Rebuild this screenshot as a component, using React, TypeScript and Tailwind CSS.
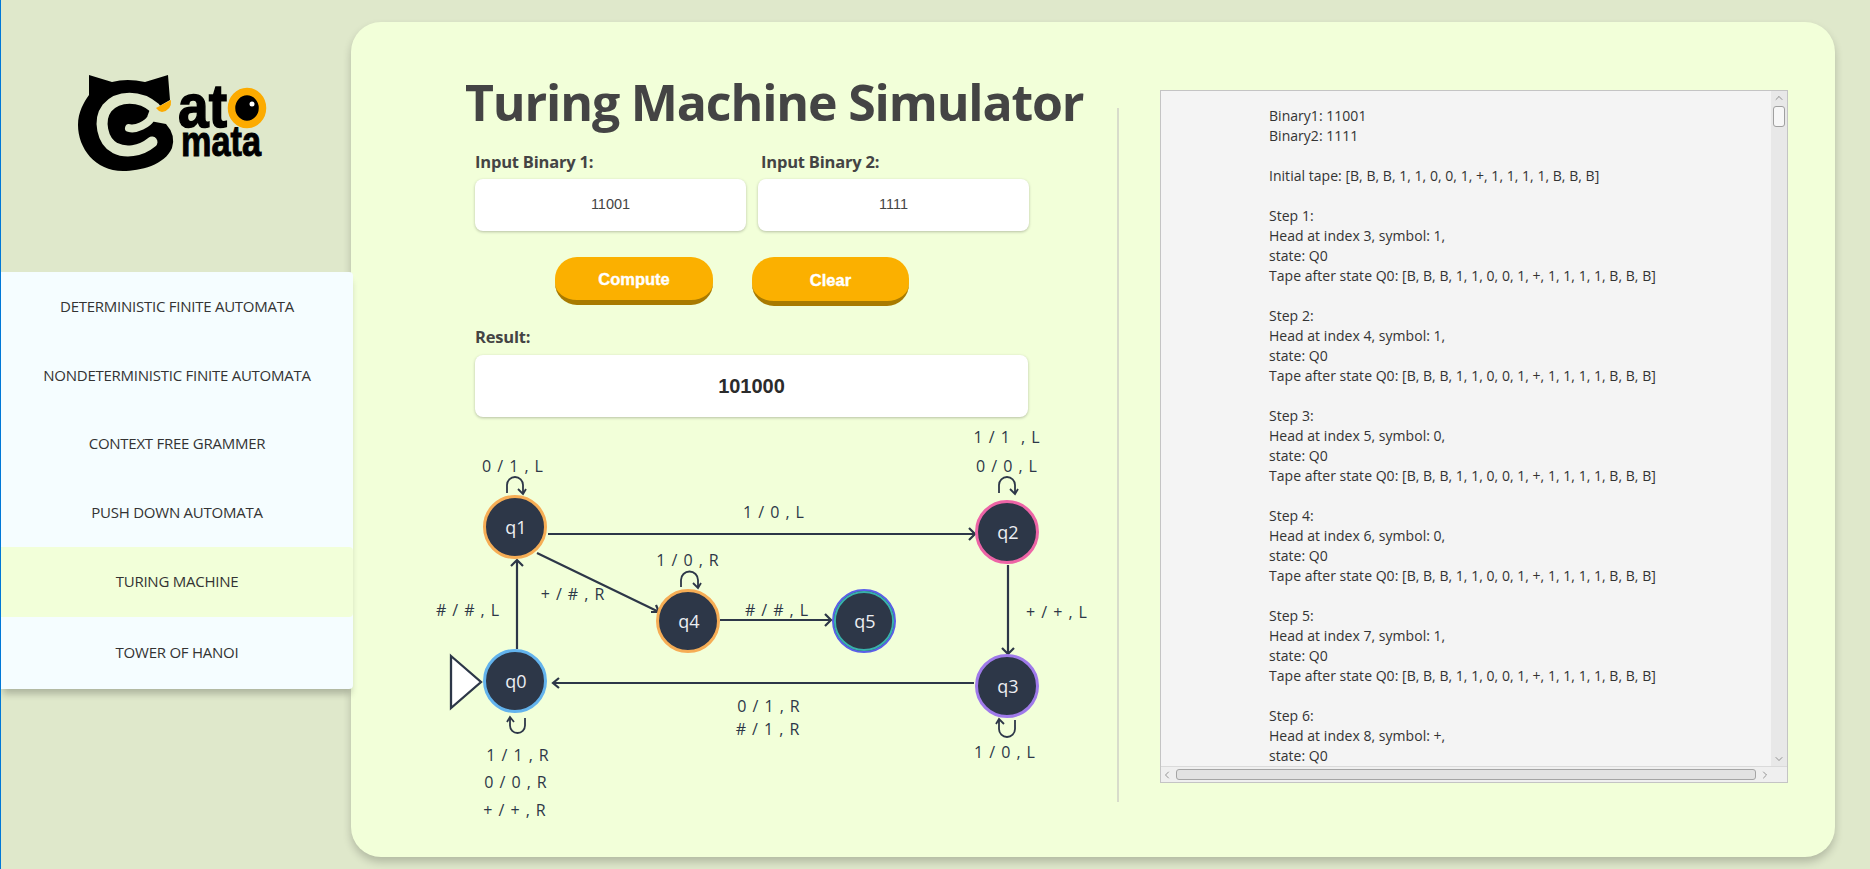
import { ChevronUp, ChevronDown, ChevronLeft, ChevronRight } from "lucide-react";

const SEGOE = "font-['Open_Sans','Noto_Sans',sans-serif]";
const NAV = [
  { label: "DETERMINISTIC FINITE AUTOMATA", h: "h-[69px]", active: false, pad: "" },
  { label: "NONDETERMINISTIC FINITE AUTOMATA", h: "h-[69px]", active: false, pad: "" },
  { label: "CONTEXT FREE GRAMMER", h: "h-[68px]", active: false, pad: "pb-[2px]" },
  { label: "PUSH DOWN AUTOMATA", h: "h-[69px]", active: false, pad: "" },
  { label: "TURING MACHINE", h: "h-[70px]", active: true, pad: "pb-[2px]" },
  { label: "TOWER OF HANOI", h: "h-[72px]", active: false, pad: "pb-[2px]" },
];

const TAPE = "[B, B, B, 1, 1, 0, 0, 1, +, 1, 1, 1, 1, B, B, B]";
const STEPS: [number, string][] = [[3, "1"], [4, "1"], [5, "0"], [6, "0"], [7, "1"], [8, "+"]];
const LINES: string[] = ["Binary1: 11001", "Binary2: 1111", "", `Initial tape: ${TAPE}`, ""];
STEPS.forEach(([i, s], n) => {
  LINES.push(`Step ${n + 1}:`, `Head at index ${i}, symbol: ${s},`, "state: Q0");
  if (n < 5) LINES.push(`Tape after state Q0: ${TAPE}`, "");
});

function Logo() {
  return (
    <svg viewBox="75 60 200 113" className="block w-[200px] h-[113px]">
      <path d="M89 75 L112 82 Q127 78 145 82 L168 75 L170 100 L156 108 L150 121 L166 124 Q176 135 172 148 C165 165 140 171 123 171 C95 171 78 148 78 125 C78 112 84 102 89 95 Z" fill="#000" />
      <path d="M152 142 C140 152 125 153 115 148 C102 141 98 120 107 108 C118 95 140 95 155 108" fill="none" stroke="#dfe8cb" strokeWidth="11" strokeLinecap="round" />
      <path d="M129 128 C136 130 148 124 151 118 L154 110" fill="none" stroke="#dfe8cb" strokeWidth="8" strokeLinecap="round" />
      <path d="M156 108 L171 100 Q172 110 162 112 Q158 111 156 108 Z" fill="#fcab00" />
      <text x="178" y="127" fontFamily="Liberation Sans" fontWeight="700" fontSize="62" textLength="49" lengthAdjust="spacingAndGlyphs" fill="#000" stroke="#000" strokeWidth="1.5">at</text>
      <ellipse cx="247" cy="108" rx="15.5" ry="16.5" fill="#000" stroke="#fcab00" strokeWidth="7.5" />
      <circle cx="252" cy="104" r="2.5" fill="#fff" />
      <text x="181" y="156" fontFamily="Liberation Sans" fontWeight="700" fontSize="42" textLength="80" lengthAdjust="spacingAndGlyphs" fill="#000" stroke="#000" strokeWidth="1">mata</text>
    </svg>
  );
}

function State({ x, y, label, border, inner }: { x: number; y: number; label: string; border: string; inner?: string }) {
  return (
    <g>
      <circle cx={x} cy={y} r={inner ? 31 : 30.5} fill="#2d3748" stroke={border} strokeWidth={inner ? 2 : 3} />
      {inner && <circle cx={x} cy={y} r={29.1} fill="#2d3748" stroke={inner} strokeWidth={2} />}
      <text x={x + 1} y={y + 6.5} textAnchor="middle" fontSize="18" fontWeight="400" fontFamily="Open Sans" fill="#eceef2">{label}</text>
    </g>
  );
}

function Diagram() {
  const labels: [number, number, string][] = [
    [513, 466, "0 / 1 , L"], [1007, 437, "1 / 1  , L"], [1007, 466, "0 / 0 , L"], [774, 512, "1 / 0 , L"],
    [688, 560, "1 / 0 , R"], [573, 594, "+ / # , R"], [468, 610, "# / # , L"], [777, 610, "# / # , L"],
    [1057, 612, "+ / + , L"], [769, 706, "0 / 1 , R"], [768, 729, "# / 1 , R"], [1005, 752, "1 / 0 , L"],
    [518, 755, "1 / 1 , R"], [516, 782, "0 / 0 , R"], [515, 810, "+ / + , R"],
  ];
  const stroke = { fill: "none", stroke: "#2d3748", strokeWidth: 2.2 };
  const thin = { fill: "none", stroke: "#2d3748", strokeWidth: 1.8 };
  return (
    <svg viewBox="430 424 680 406" className="block w-[680px] h-[406px] mt-[7px]">
      <path d="M548 534 H974 M969 528 L975 534 L969 540" {...stroke} />
      <path d="M537 553 L659 612 M651 612 L659 612 L656 605" {...stroke} />
      <path d="M720 620 H831 M825 614 L831 620 L825 626" {...stroke} />
      <path d="M1008 565 V654 M1002 648 L1008 654 L1014 648" {...stroke} />
      <path d="M974 683 H553 M559 678 L553 683 L559 688" {...stroke} />
      <path d="M517 649 V560 M511 566 L517 560 L523 566" {...stroke} />
      <path d="M507 493 V485 A8 8 0 0 1 523 485 V494 M518 489 L523 494 L526 489" {...thin} />
      <path d="M999 493 V485 A8 8 0 0 1 1015 485 V494 M1010 489 L1015 494 L1018 489" {...thin} />
      <path d="M681 587 V580 A8.5 8.5 0 0 1 698 580 V588 M693 583 L698 588 L701 583" {...thin} />
      <path d="M525 718 V725.5 A7.5 7.5 0 0 1 510 725.5 V717 M507 722 L510 717 L514 722" {...thin} />
      <path d="M1015 720 V729 A8 8 0 0 1 999 729 V719 M996 724 L999 719 L1004 724" {...thin} />
      <path d="M451 656 L481 682 L451 708 Z" fill="#fff" stroke="#2d3748" strokeWidth={2.3} />
      <State x={515} y={527} label="q1" border="#f6ad55" />
      <State x={1007} y={532} label="q2" border="#ed64a6" />
      <State x={1007} y={686} label="q3" border="#9f7aea" />
      <State x={515} y={681} label="q0" border="#63b3ed" />
      <State x={688} y={621} label="q4" border="#f6ad55" />
      <State x={864} y={621} label="q5" border="#5a5fe8" inner="#38b2ac" />
      {labels.map(([x, y, t]) => (
        <text key={`${x}-${y}`} x={x} y={y + 6} textAnchor="middle" fontSize="16" fontFamily="Open Sans" fontWeight="500" letterSpacing="0.95" fill="#2d3748" xmlSpace="preserve">{t}</text>
      ))}
    </svg>
  );
}

function TraceBox() {
  return (
    <div className={`mt-[68px] ml-[41px] w-[628px] h-[693px] border border-[#c4c4c4] bg-[#f4f4f4] flex flex-col text-[#333] ${SEGOE}`}>
      <div className="flex flex-1 min-h-0">
        <div className="flex-1 overflow-hidden pl-[108px] pt-[15px] text-[14px] leading-[20px] tracking-[0.03px] whitespace-nowrap">
          {LINES.map((l, i) => (
            <div key={i} className="h-[20px]">{l}</div>
          ))}
        </div>
        <div className="w-[16px] bg-[#e8e8e8] flex flex-col items-center justify-between pt-[1px] pb-[1px]">
          <div className="flex flex-col items-center">
            <ChevronUp size={12} strokeWidth={1.2} className="text-[#555]" />
            <div className="mt-[2px] w-[12px] h-[21px] rounded-[3px] bg-[#f7f7f7] border border-[#a0a0a0]" />
          </div>
          <ChevronDown size={12} strokeWidth={1.2} className="text-[#555]" />
        </div>
      </div>
      <div className="h-[16px] flex bg-[#efefef] border-t border-[#dadada] items-center">
        <div className="flex-1 flex items-center">
          <ChevronLeft size={12} strokeWidth={1.2} className="text-[#555]" />
          <div className="ml-[3px] w-[580px] h-[11px] rounded-[3px] bg-[#e2e2e2] border border-[#a5a5a5]" />
          <ChevronRight size={12} strokeWidth={1.2} className="ml-[3px] text-[#555]" />
        </div>
      </div>
    </div>
  );
}

export default function App() {
  return (
    <div className="flex h-[869px] w-[1870px] overflow-hidden bg-[#dfe8cb] border-l border-[#0078d7]">
      <aside className="w-[350px] shrink-0">
        <div className="pl-[74px] pt-[60px]">
          <Logo />
        </div>
        <nav className={`relative z-10 mt-[99px] w-[352px] rounded-r-[4px] shadow-[0_7px_7px_-2px_rgba(0,0,0,0.22)] bg-[#f5fdff] text-[15px] text-[#333] ${SEGOE}`}>
          {NAV.map((n) => (
            <div key={n.label} className={`${n.h} ${n.pad} flex items-center justify-center tracking-[-0.25px] rounded-r-[4px] ${n.active ? "bg-[#f2ffd9]" : ""}`}>
              {n.label}
            </div>
          ))}
        </nav>
      </aside>
      <main className="mt-[22px] w-[1484px] h-[835px] rounded-[30px] bg-[#f2ffd9] shadow-[0_5px_9px_rgba(0,0,0,0.2)] flex">
        <section className="w-[766px] shrink-0 pl-[79px]">
          <div className="ml-[45px]">
            <h1 className={`mt-[48px] -ml-[10px] h-[64px] text-[50px] leading-[64px] font-bold text-[#444] tracking-[-1.15px] whitespace-nowrap ${SEGOE}`}>
              Turing Machine Simulator
            </h1>
            <div className={`mt-[18px] grid grid-cols-[271px_271px] gap-x-[12px] text-[16.5px] leading-[20px] font-bold text-[#444] tracking-[-0.2px] ${SEGOE}`}>
              <label>Input Binary 1:</label>
              <label className="ml-[3px]">Input Binary 2:</label>
            </div>
            <div className="mt-[7px] grid grid-cols-[271px_271px] gap-x-[12px] font-['Liberation_Sans',sans-serif] text-[14.5px] text-[#444]">
              <div className="h-[52px] rounded-[8px] bg-white shadow-[0_1px_3px_rgba(0,0,0,0.25)] flex items-center justify-center">11001</div>
              <div className="h-[52px] rounded-[8px] bg-white shadow-[0_1px_3px_rgba(0,0,0,0.25)] flex items-center justify-center">1111</div>
            </div>
            <div className="mt-[26px] ml-[80px] flex gap-[39px] font-['Liberation_Sans',sans-serif] text-[16.5px] font-bold text-white [-webkit-text-stroke:0.4px_white]">
              <button className="w-[158px] h-[48px] pt-[2px] rounded-[22px] bg-[#fbb000] border-b-[5px] border-[#a87a00]">Compute</button>
              <button className="w-[157px] h-[49px] pt-[2px] rounded-[22px] bg-[#fbb000] border-b-[5px] border-[#a87a00]">Clear</button>
            </div>
            <div className={`mt-[21px] text-[16.5px] leading-[20px] font-bold text-[#444] tracking-[-0.2px] ${SEGOE}`}>Result:</div>
            <div className="mt-[8px] w-[553px] h-[62px] rounded-[8px] bg-white shadow-[0_1px_3px_rgba(0,0,0,0.25)] flex items-center justify-center font-['Liberation_Sans',sans-serif] text-[20px] font-bold text-[#2b2b2b]">
              101000
            </div>
          </div>
          <Diagram />
        </section>
        <div className="mt-[86px] h-[694px] w-[2px] bg-[#d8dccb]" />
        <TraceBox />
      </main>
    </div>
  );
}
